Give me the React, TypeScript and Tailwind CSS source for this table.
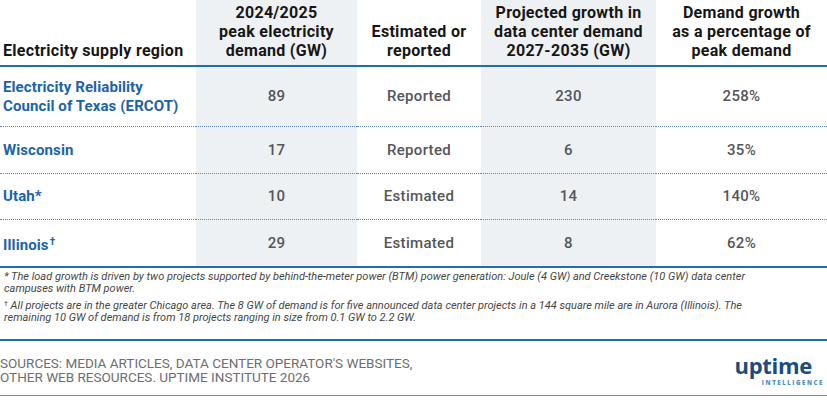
import React from 'react';

type Row = {
  region: React.ReactNode;
  peak: string;
  kind: string;
  growth: string;
  pct: string;
  h: string;
};

const rows: Row[] = [
  {
    region: (
      <>
        Electricity Reliability
        <br />
        Council of Texas (ERCOT)
      </>
    ),
    peak: '89',
    kind: 'Reported',
    growth: '230',
    pct: '258%',
    h: 'h-[60px]',
  },
  { region: 'Wisconsin', peak: '17', kind: 'Reported', growth: '6', pct: '35%', h: 'h-[47px]' },
  { region: 'Utah*', peak: '10', kind: 'Estimated', growth: '14', pct: '140%', h: 'h-[46px]' },
  {
    region: (
      <>
        Illinois<span className="text-[10px] align-[5px] ml-[1px]">†</span>
      </>
    ),
    peak: '29',
    kind: 'Estimated',
    growth: '8',
    pct: '62%',
    h: 'h-[48px]',
  },
];

const grid = 'grid grid-cols-[196px_161px_124px_175px_171px]';

export default function App() {
  return (
    <div className="w-[827px] h-[413px] bg-white overflow-hidden font-['Roboto',sans-serif]">
      {/* header */}
      <div className={`${grid} h-[67px] text-[16px] font-bold leading-[19px] tracking-[0.3px] text-[#161616]`}>
        <div className="flex items-end pl-[3px] pb-[5px] border-b-2 border-[#1e6db5]">Electricity supply region</div>
        <div className="flex items-end justify-center text-center pb-[5px] bg-[#eef1f3] border-b-2 border-[#1e6db5]">
          <span>
            2024/2025
            <br />
            peak electricity
            <br />
            demand (GW)
          </span>
        </div>
        <div className="flex items-end justify-center text-center pb-[5px] border-b-2 border-[#1e6db5]">
          <span>
            Estimated or
            <br />
            reported
          </span>
        </div>
        <div className="flex items-end justify-center text-center pb-[5px] bg-[#eef1f3] border-b-2 border-[#1e6db5]">
          <span>
            Projected growth in
            <br />
            data center demand
            <br />
            2027-2035 (GW)
          </span>
        </div>
        <div className="flex items-end justify-center text-center pb-[5px] border-b-2 border-[#1e6db5]">
          <span>
            Demand growth
            <br />
            as a percentage of
            <br />
            peak demand
          </span>
        </div>
      </div>

      {/* body */}
      {rows.map((r, i) => {
        const last = i === rows.length - 1;
        const line = last ? 'border-b-2 border-solid border-[#1e6db5]' : 'border-b border-dotted border-[#5b83b8]';
        return (
          <div key={i} className={`${grid} ${r.h} text-[15px] font-medium tracking-[0.3px]`}>
            <div className={`flex items-center pl-[3px] font-bold text-[15px] leading-[19px] tracking-[0.1px] text-[#1c64a8] ${line}`}>
              <span>{r.region}</span>
            </div>
            <div className={`flex items-center justify-center text-[#555659] bg-[#eef1f3] ${line}`}>{r.peak}</div>
            <div className={`flex items-center justify-center text-[#555659] ${line}`}>{r.kind}</div>
            <div className={`flex items-center justify-center text-[#555659] bg-[#eef1f3] ${line}`}>{r.growth}</div>
            <div className={`flex items-center justify-center text-[#555659] ${line}`}>{r.pct}</div>
          </div>
        );
      })}

      {/* footnotes */}
      <div className="pl-[4px] pt-[3px] pb-[15px] border-b-2 border-[#1e6db5] text-[11px] italic leading-[12px] text-[#454545] flex flex-col gap-[3px]">
        <p>
          * The load growth is driven by two projects supported by behind-the-meter power (BTM) power generation: Joule (4 GW) and Creekstone (10 GW) data center
          <br />
          campuses with BTM power.
        </p>
        <p>
          <span className="text-[7px] not-italic align-[3px]">†</span> All projects are in the greater Chicago area. The 8 GW of demand is for five announced data center projects in a 144 square mile are in Aurora (Illinois). The
          <br />
          remaining 10 GW of demand is from 18 projects ranging in size from 0.1 GW to 2.2 GW.
        </p>
      </div>

      {/* sources + logo */}
      <div className="flex items-center justify-between h-[55px] border-b border-[#8a8a8a]">
        <p className="text-[13.5px] leading-[14px] uppercase text-[#6d6e70] pt-[3px]">
          Sources: Media articles, data center operator's websites,
          <br />
          Other web resources. Uptime Institute 2026
        </p>
        <div className="flex flex-col items-end pr-[3px] pt-[5px]">
          <span className="font-['Open_Sans',sans-serif] font-bold text-[22px] leading-[20px] tracking-[-0.3px] text-[#1b4c7d] mr-[12px]">uptime</span>
          <span className="font-['Open_Sans',sans-serif] font-extrabold text-[6px] leading-[8px] tracking-[1.6px] text-[#4f8fcb] mt-[4px]">INTELLIGENCE</span>
        </div>
      </div>
    </div>
  );
}
